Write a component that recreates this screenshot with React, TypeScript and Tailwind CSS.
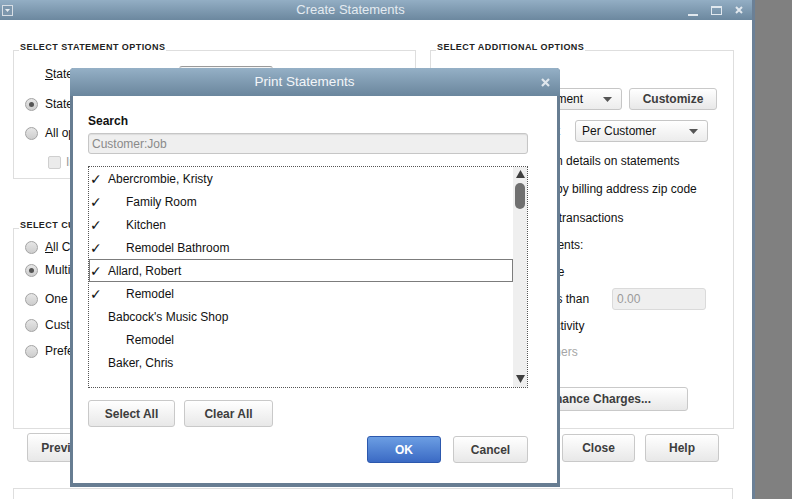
import React from 'react';

const rows = [
  { name: 'Abercrombie, Kristy', level: 0, checked: true },
  { name: 'Family Room', level: 1, checked: true },
  { name: 'Kitchen', level: 1, checked: true },
  { name: 'Remodel Bathroom', level: 1, checked: true },
  { name: 'Allard, Robert', level: 0, checked: true, selected: true },
  { name: 'Remodel', level: 1, checked: true },
  { name: "Babcock's Music Shop", level: 0, checked: false },
  { name: 'Remodel', level: 1, checked: false },
  { name: 'Baker, Chris', level: 0, checked: false },
];

const Radio = ({ checked }: { checked?: boolean }) => (
  <span className="w-[13px] h-[13px] rounded-full border border-[#a3a3a3] bg-linear-to-b from-[#e6e6e6] to-[#cdcdcd] flex items-center justify-center shrink-0">
    {checked && <span className="w-[5px] h-[5px] rounded-full bg-[#555]" />}
  </span>
);

const Check = () => (
  <span className="w-[13px] h-[13px] rounded-[2px] border border-[#cfcfcf] bg-[#ebebeb] shrink-0" />
);

const Btn = ({ children, className = '' }: { children: React.ReactNode; className?: string }) => (
  <button className={`border border-[#c9c9c9] rounded-[3px] bg-linear-to-b from-white to-[#e8e8e8] text-[12px] font-bold text-[#3d3d3d] ${className}`}>
    {children}
  </button>
);

const Dropdown = ({ text, className = '' }: { text: string; className?: string }) => (
  <div className={`h-[22px] border border-[#c6c6c6] rounded-[3px] bg-linear-to-b from-white to-[#ececec] flex items-center pl-[6px] pr-[9px] ${className}`}>
    <span className="flex-1 truncate">{text}</span>
    <svg width="9" height="5" viewBox="0 0 9 5">
      <polygon points="0,0 9,0 4.5,5" fill="#555" />
    </svg>
  </div>
);

const GroupBox = ({ title, className = '', children }: { title: string; className?: string; children?: React.ReactNode }) => (
  <div className={`relative border border-[#dedede] ${className}`}>
    <span className="absolute -top-[10px] left-[5px] bg-white px-[1px] text-[9px] leading-[12px] font-bold tracking-[0.45px] text-[#222]">{title}</span>
    {children}
  </div>
);

const PrintStatements = () => (
  <div className="absolute left-[70px] top-[68px] w-[490px] h-[419px] bg-white border-x-[3px] border-b-4 border-[#677d92] rounded-t-[4px] flex flex-col">
    <div className="h-[28px] -mx-[3px] rounded-t-[4px] bg-linear-to-b from-[#95b0c6] to-[#6a869d] flex items-center">
      <span className="flex-1 text-center pl-[4px] text-[13.5px] text-[#f3f6f9]">Print Statements</span>
      <span className="w-[20px] mr-[5px] flex justify-center">
        <svg width="9" height="9" viewBox="0 0 9 9">
          <path d="M1 1L8 8M8 1L1 8" stroke="#dfe6ec" strokeWidth="2.2" />
        </svg>
      </span>
    </div>
    <div className="px-[15px] pt-[18px] flex flex-col">
      <div className="text-[12px] leading-[14px] font-bold text-[#111]">Search</div>
      <div className="mt-[5px] w-[440px] h-[21px] border border-[#c6c6c6] rounded-[3px] bg-[#efefef] shadow-[inset_0_1px_1px_rgba(0,0,0,0.08)] flex items-center pl-[3px] text-[12px] text-[#8a8a8a]">
        Customer:Job
      </div>
      <div className="mt-[12px] w-[440px] h-[222px] border border-dotted border-[#555] flex">
        <div className="flex-1 flex flex-col">
          {rows.map((r, i) => (
            <div
              key={i}
              className={`h-[23px] flex items-center border ${r.selected ? 'border-[#7c7c7c]' : 'border-transparent'}`}
            >
              <span className="w-[18px] text-[14px] leading-[16px] text-[#111] font-['DejaVu_Sans',sans-serif]">{r.checked ? '✓' : ''}</span>
              <span className={`text-[12px] text-[#111] ${r.level ? 'pl-[18px]' : ''}`}>{r.name}</span>
            </div>
          ))}
        </div>
        <div className="w-[14px] bg-[#efefef] flex flex-col items-center">
          <svg className="mt-[3px]" width="9" height="8" viewBox="0 0 9 8">
            <polygon points="4.5,0 9,8 0,8" fill="#3f3f3f" />
          </svg>
          <div className="mt-[5px] w-[10px] h-[26px] rounded-full bg-[#707070]" />
          <div className="flex-1" />
          <svg className="mb-[4px]" width="9" height="8" viewBox="0 0 9 8">
            <polygon points="0,0 9,0 4.5,8" fill="#3f3f3f" />
          </svg>
        </div>
      </div>
      <div className="mt-[12px] flex gap-[9px]">
        <Btn className="w-[87px] h-[27px]">Select All</Btn>
        <Btn className="w-[89px] h-[27px]">Clear All</Btn>
      </div>
      <div className="mt-[9px] w-[440px] flex justify-end gap-[12px]">
        <button className="w-[74px] h-[27px] rounded-[3px] border border-[#2c58ad] bg-linear-to-b from-[#6c9ee3] to-[#3b6ac4] text-white text-[12px] font-bold">
          OK
        </button>
        <Btn className="w-[75px] h-[27px]">Cancel</Btn>
      </div>
    </div>
  </div>
);

export default function App() {
  return (
    <div className="relative w-[792px] h-[499px] overflow-hidden flex bg-[#808080] font-['Liberation_Sans',Arial,sans-serif] text-[12px] leading-[14px] text-[#111]">
      <div className="w-[755px] h-full bg-white border-r-[3px] border-[#6b8096] flex flex-col">
        {/* title bar */}
        <div className="h-[20px] shrink-0 bg-linear-to-b from-[#93aec4] to-[#6c889f] flex items-center">
          <div className="ml-[2px] w-[11px] h-[11px] border border-[#d7dee5] bg-[#7d97ad] flex items-center justify-center">
            <svg width="5" height="3" viewBox="0 0 5 3">
              <polygon points="0,0 5,0 2.5,3" fill="#e6ecf1" />
            </svg>
          </div>
          <span className="flex-1 text-center text-[13px] text-[#e4ebf1]">Create Statements</span>
          <div className="flex items-center gap-[13px] mr-[9px]">
            <span className="w-[10px] h-[2px] mt-[9px] bg-[#e1e8ee]" />
            <span className="w-[11px] h-[9px] border border-t-2 border-[#e1e8ee]" />
            <svg width="8" height="8" viewBox="0 0 8 8">
              <path d="M1 1L7 7M7 1L1 7" stroke="#e1e8ee" strokeWidth="2" />
            </svg>
          </div>
        </div>

        {/* body */}
        <div className="flex-1 pl-[13px] pt-[30px] flex flex-col">
          <div className="flex gap-[14px]">
            {/* left column */}
            <div className="w-[403px] flex flex-col">
              <GroupBox title="SELECT STATEMENT OPTIONS" className="h-[129px]">
                <div className="flex flex-col pl-[11px]">
                  <div className="mt-[15px] h-[22px] flex">
                    <span className="w-[154px] pl-[20px] mt-[1px]"><u>S</u>tatement Date</span>
                    <div className="w-[94px] h-[22px] border border-[#c6c6c6] border-t-[#9a9a9a] rounded-[3px] bg-[#f5f5f5]" />
                  </div>
                  <div className="mt-[5px] h-[22px] flex items-center gap-[7px]">
                    <Radio checked />
                    <span>Statement Period From</span>
                  </div>
                  <div className="mt-[7px] h-[22px] flex items-center gap-[7px]">
                    <Radio />
                    <span>All open transactions as of Statement Date</span>
                  </div>
                  <div className="mt-[7px] h-[22px] flex items-center gap-[5px] pl-[23px]">
                    <Check />
                    <span className="text-[#999]">Include only transactions over 30 days past due date</span>
                  </div>
                </div>
              </GroupBox>
              <GroupBox title="SELECT CUSTOMERS" className="mt-[49px] h-[201px]">
                <div className="flex flex-col pl-[11px]">
                  <div className="mt-[8px] h-[20px] flex items-center gap-[7px]">
                    <Radio />
                    <span><u>A</u>ll Customers</span>
                  </div>
                  <div className="mt-[3px] h-[20px] flex items-center gap-[7px]">
                    <Radio checked />
                    <span>Multiple Customers</span>
                  </div>
                  <div className="mt-[9px] h-[20px] flex items-center gap-[7px]">
                    <Radio />
                    <span>One Customer</span>
                  </div>
                  <div className="mt-[6px] h-[20px] flex items-center gap-[7px]">
                    <Radio />
                    <span>Customers of Type</span>
                  </div>
                  <div className="mt-[6px] h-[20px] flex items-center gap-[7px]">
                    <Radio />
                    <span>Preferred Send Method</span>
                  </div>
                </div>
              </GroupBox>
              <div className="mt-[4px] pl-[14px] flex gap-[10px]">
                <Btn className="w-[74px] h-[29px]">Preview</Btn>
                <Btn className="w-[74px] h-[29px]">Print</Btn>
                <Btn className="w-[74px] h-[29px]">E-mail</Btn>
              </div>
            </div>

            {/* right column */}
            <div className="w-[304px] flex flex-col">
              <GroupBox title="SELECT ADDITIONAL OPTIONS" className="h-[379px]">
                <div className="flex flex-col">
                  <div className="mt-[19px] h-[16px] pl-[5px]">Template</div>
                  <div className="mt-[2px] flex items-center pl-[9px]">
                    <Dropdown text="Intuit Standard Statement" className="w-[182px]" />
                    <Btn className="ml-[7px] w-[88px] h-[22px]">Customize</Btn>
                  </div>
                  <div className="mt-[10px] flex items-center pl-[9px]">
                    <span className="w-[135px]">Create One Statement</span>
                    <Dropdown text="Per Customer" className="w-[133px] h-[21px]" />
                  </div>
                  <div className="mt-[9px] h-[20px] flex items-center gap-[3px] pl-[19px]">
                    <Check />
                    <span>Show invoice item details on statements</span>
                  </div>
                  <div className="mt-[8px] h-[20px] flex items-center gap-[3px] pl-[19px]">
                    <Check />
                    <span>Print statements by billing address zip code</span>
                  </div>
                  <div className="mt-[9px] h-[20px] flex items-center gap-[3px] pl-[17px]">
                    <Check />
                    <span>Print due date on transactions</span>
                  </div>
                  <div className="mt-[7px] h-[20px] flex items-center pl-[15px]">
                    <span>Do not create statements:</span>
                  </div>
                  <div className="mt-[7px] h-[20px] flex items-center gap-[3px] pl-[14px]">
                    <Check />
                    <span>with a zero balance</span>
                  </div>
                  <div className="mt-[6px] h-[22px] flex items-center gap-[3px] pl-[14px]">
                    <Check />
                    <span className="w-[148px]">with a balance less than</span>
                    <div className="w-[94px] h-[22px] border border-[#dadada] rounded-[3px] bg-[#efefef] flex items-center pl-[4px] text-[#9a9a9a]">
                      0.00
                    </div>
                  </div>
                  <div className="mt-[6px] h-[20px] flex items-center gap-[3px] pl-[14px]">
                    <Check />
                    <span>with no account activity</span>
                  </div>
                  <div className="mt-[6px] h-[20px] flex items-center gap-[3px] pl-[14px]">
                    <Check />
                    <span className="text-[#a6a6a6]">for inactive customers</span>
                  </div>
                  <Btn className="mt-[25px] ml-[31px] w-[226px] h-[24px]">Assess Finance Charges...</Btn>
                </div>
              </GroupBox>
              <div className="mt-[5px] pr-[15px] flex justify-end gap-[10px]">
                <Btn className="w-[73px] h-[28px]">Close</Btn>
                <Btn className="w-[74px] h-[28px]">Help</Btn>
              </div>
            </div>
          </div>
          <div className="mt-[26px] w-[720px] h-[40px] border border-[#dedede]" />
        </div>
      </div>
      <PrintStatements />
    </div>
  );
}
